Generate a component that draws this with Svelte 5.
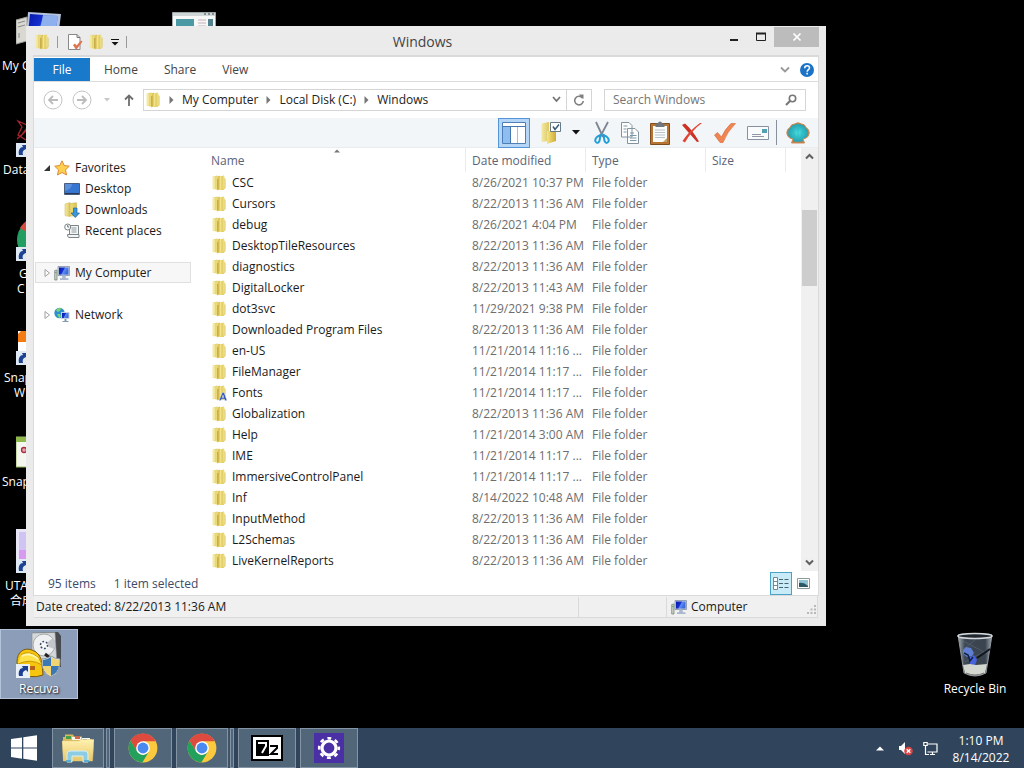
<script>
  const files = [
    ['CSC', '8/26/2021 10:37 PM'],
    ['Cursors', '8/22/2013 11:36 AM'],
    ['debug', '8/26/2021 4:04 PM'],
    ['DesktopTileResources', '8/22/2013 11:36 AM'],
    ['diagnostics', '8/22/2013 11:36 AM'],
    ['DigitalLocker', '8/22/2013 11:43 AM'],
    ['dot3svc', '11/29/2021 9:38 PM'],
    ['Downloaded Program Files', '8/22/2013 11:36 AM'],
    ['en-US', '11/21/2014 11:16 ...'],
    ['FileManager', '11/21/2014 11:17 ...'],
    ['Fonts', '11/21/2014 11:17 ...'],
    ['Globalization', '8/22/2013 11:36 AM'],
    ['Help', '11/21/2014 3:00 AM'],
    ['IME', '11/21/2014 11:17 ...'],
    ['ImmersiveControlPanel', '11/21/2014 11:17 ...'],
    ['Inf', '8/14/2022 10:48 AM'],
    ['InputMethod', '8/22/2013 11:36 AM'],
    ['L2Schemas', '8/22/2013 11:36 AM'],
    ['LiveKernelReports', '8/22/2013 11:36 AM']
  ];
  const crumbs = ['My Computer', 'Local Disk (C:)', 'Windows'];
  const shortcuts = [
    { icon: 'pc', y: 8, lines: [['My C', 2]] },
    { icon: 'data', y: 112, lines: [['Data', 3]] },
    { icon: 'chrome', y: 216, lines: [['G', 19], ['C', 17]] },
    { icon: 'snapw', y: 320, lines: [['Snap', 4], ['W', 14]] },
    { icon: 'snap', y: 424, lines: [['Snap', 2]] },
    { icon: 'uta', y: 528, lines: [['UTA', 5], ['合成', 10]] }
  ];
</script>

{#snippet folder(size, letter = false)}
  <svg width={size} height={size} viewBox="0 0 16 16" aria-hidden="true">
    <path d="M1.500 1.500 6.500.500v14l-5-.500z" fill="url(#fold-a)" />
    <path d="M8.500 1.500 13 .500l.5 2.500 1 1v9l-2 2h-4z" fill="url(#fold-c)" />
    <path d="M5.500 1.500 9 .800v13.200l-2.500 1.500-1-1z" fill="url(#fold-b)" />
    <path d="M9 1.500v12.500M3 2v11.500" stroke="#fbf6b8" stroke-width=".8" />
    <path d="M13 1v12.500" stroke="#fdf9c8" stroke-width=".7" />
    <path d="M6.800 4v10.500" stroke="#b79a35" stroke-width=".9" />
    {#if letter}
      <path d="m8 15.600 3.400-8.200h1.600l3 8.200h-2.200l-.5-1.700h-2.700l-.6 1.700zm3.100-3.100h1.700l-.8-2.600z" fill="#2f57b8" stroke="#e8efff" stroke-width=".4" />
    {/if}
  </svg>
{/snippet}

{#snippet computer(size)}
  <svg width={size} height={size} viewBox="0 0 16 16" aria-hidden="true">
    <path d="M.7 5.500 3 5v10H.700z" fill="#c9d4c4" stroke="#6f7d74" stroke-width=".7" />
    <path d="M1.200 7.500h1.200" stroke="#58a050" />
    <path d="M4 1.500h11.500v9H4z" fill="#c7d1e0" stroke="#7986a0" stroke-width=".7" />
    <path d="M5 2.500h9.500V9.600H5z" fill="url(#screen)" />
    <path d="M8.500 10.500h3l.5 3h-4zM6 13.300h8.500v1.700H6z" fill="#a9b8cf" />
  </svg>
{/snippet}

{#snippet chrome(size)}
  <svg width={size} height={size} viewBox="0 0 48 48" aria-hidden="true">
    <circle cx="24" cy="24" r="23" fill="#fbc93d" />
    <path d="M4 12.500A23 23 0 0 1 44.200 13H24L14.500 30z" fill="#de4a3e" />
    <path d="M4 12.500A23 23 0 0 0 23 47l10.500-17.500a11 11 0 0 1-19-.5z" fill="#23a05b" />
    <circle cx="24" cy="24" r="11" fill="#fff" />
    <circle cx="24" cy="24" r="8.700" fill="#4a8af0" />
  </svg>
{/snippet}

{#snippet arrow()}
  <path d="M0 31h14v14H0z" fill="#dfe9f4" />
  <path d="M3 43c-1-5 1-8 4-8l-1-2h6v6l-2-2c-3 1-4 3-3 6z" fill="#1d4291" />
{/snippet}

<svg class="defs" width="0" height="0" aria-hidden="true">
  <defs>
    <linearGradient id="fold-a"><stop stop-color="#f3e9a4" /><stop offset="1" stop-color="#dcc862" /></linearGradient>
    <linearGradient id="fold-b"><stop stop-color="#f4e584" /><stop offset="1" stop-color="#cfaa34" /></linearGradient>
    <linearGradient id="fold-c"><stop stop-color="#efdd78" /><stop offset="1" stop-color="#d9c358" /></linearGradient>
    <linearGradient id="screen" x2="1" y2=".4"><stop stop-color="#0716a8" /><stop offset=".5" stop-color="#1530d0" /><stop offset=".6" stop-color="#5f8cf0" /><stop offset="1" stop-color="#3b68dc" /></linearGradient>
    <linearGradient id="glass" x2="1"><stop stop-color="#a7b0b8" /><stop offset=".2" stop-color="#3d4854" /><stop offset=".8" stop-color="#39434e" /><stop offset="1" stop-color="#a5adb5" /></linearGradient>
    <linearGradient id="gold" y2="1" x2="0"><stop stop-color="#fff1b0" /><stop offset="1" stop-color="#e8c767" /></linearGradient>
    <radialGradient id="shell-fill"><stop stop-color="#48e0e0" /><stop offset=".8" stop-color="#27a5b4" /><stop offset="1" stop-color="#c07850" /></radialGradient>
  </defs>
</svg>

<div class="desktop">
  <div class="canvas">
    {#each shortcuts as s}
      <div class="shortcut" style="top: {s.y}px">
        <svg width="46" height="46" viewBox="0 0 46 46" aria-hidden="true">
          {#if s.icon === 'pc'}
            <path d="M0 12 11 9v24L0 36z" fill="#d9d9d2" stroke="#999" />
            <path d="m2 15 7-2M2 19l7-2M3 25v5" stroke="#888" />
            <path d="m12 4 33 2-3 24-32-2z" fill="#b5c3de" />
            <path d="m14 6 28 2-3 19-27-1z" fill="url(#screen)" />
            <path d="m27 7 15 1-3 19-16-1z" fill="#8fb0ee" />
          {:else if s.icon === 'data'}
            <path d="m2 9 9 4 8-5-3 12 6 6-12 2-8-5 4-8zm3 15 8-11 8 10M1 27l9-8 8 8" fill="none" stroke="#a8242e" stroke-width="1.300" />
          {:else if s.icon === 'chrome'}
            <circle cx="23" cy="24" r="22" fill="#219e60" />
            <path d="M4 12A22 22 0 0 1 42 12L23 24z" fill="#d84b42" />
          {:else if s.icon === 'snapw'}
            <path d="M2 11h40v33H2z" fill="#fff" /><path d="M2 14l3-3h37v11H2z" fill="#f47a12" />
          {:else if s.icon === 'snap'}
            <path d="M0 13h44v30H0z" fill="#f4f6ef" stroke="#9cba62" /><path d="M0 13h44v5H0z" fill="#8fb84c" />
            <circle cx="8" cy="26" r="2.500" fill="#e7a0a8" stroke="#a82d44" stroke-width="1.300" />
          {:else}
            <path d="M0 1h44v43H0z" fill="#e8e6f4" /><path d="M3 4h40v27H3z" fill="#cfc4f4" /><path d="M3 22h40v9H3z" fill="#d89af0" /><path d="M10 18l3-4v17H10z" fill="#fff" />
          {/if}
          {#if s.icon !== 'pc' && s.icon !== 'snap'}{@render arrow()}{/if}
        </svg>
        {#each s.lines as [text, x]}
          <span style="padding-left: {x}px">{text}</span>
        {/each}
      </div>
    {/each}

    <svg class="page-icon" width="44" height="32" viewBox="0 0 44 32" aria-hidden="true">
      <path d="M.5.5h43v31H.5z" fill="#f6f8f8" stroke="#9da6a8" /><path d="M1 1h42v3H1z" fill="#ced6d8" />
      <path d="M4 7h18v20H4z" fill="#4b99a4" /><path d="M26 8h8M26 11h8M26 14h8" stroke="#c3aeb4" /><path d="M36 7h5v20h-5z" fill="#53828c" />
      <path d="M32 2h2M36 2h2M40 2h2" stroke="#404648" />
    </svg>

    <button class="desk recuva">
      <svg width="46" height="46" viewBox="0 0 46 46" aria-hidden="true">
        <path d="m16 1 26-1 3 4v31H16z" fill="#474a4e" /><path d="m16 1 23-.500 2 32H16z" fill="#d5d8db" stroke="#888" stroke-width=".6" />
        <circle cx="28" cy="13" r="11" fill="#eef0f1" stroke="#a5a9ad" /><path d="m28 13 9-7a11 11 0 0 1 1 11z" fill="#c3c7cb" />
        <circle cx="28" cy="13" r="3.500" fill="#f8f8f8" stroke="#3d4964" stroke-width="1.500" stroke-dasharray="1.800 1.800" />
        <path d="m29 22 5 4" stroke="#222" stroke-width="3" />
        <path d="M1 30C1 20 8 15 16 18q9 3 10 14l1 11q-13 5-25-4z" fill="#f6c50e" stroke="#7d5b09" />
        <path d="M5 23q8-6 18 3l3 7Q15 26 2 32" fill="#ffe24a" stroke="#cb9609" />
        <path d="M6 24q8-4 16 3" stroke="#fff6a8" fill="none" stroke-width="2" /><path d="M13 34h6v4h-6z" fill="#b5651a" />
        <path d="M26 27q5 0 9-3 4 3 9 3 1 14-9 18-10-4-9-18z" fill="#e9ebe4" stroke="#8a97a2" />
        <path d="M27 28q4 0 8-3v9h-8zM35 34h8q-1 7-8 10z" fill="#3c78b4" /><path d="M35 25q4 3 8 3v6h-8zM27 34h8v10q-7-3-8-10z" fill="#f2d573" />
        <path d="M0 32h14v14H0z" fill="#e9f0f8" /><path d="M3 44c-1-5 1-8 4-8l-1-2h6v6l-2-2c-3 1-4 3-3 6z" fill="#1d3f94" />
      </svg>
      <span>Recuva</span>
    </button>

    <button class="desk bin">
      <svg width="46" height="46" viewBox="0 0 46 46" aria-hidden="true">
        <path d="m6 3 34 0-6 38q-11 6-22 0z" fill="url(#glass)" stroke="#8d959d" />
        <path d="m9 8 27 14M11 18l14-12M13 30l22-12" stroke="#6c7885" stroke-width=".7" opacity=".6" />
        <path d="m11 18 3-3 5 1 3 5-2 3-5 1-4-3z" fill="#5f7fd4" /><path d="m18 25 4-2 3 5-2 5-5-1z" fill="#4662dd" /><path d="m12 21 4 2 2 6 3-4" fill="none" stroke="#142040" stroke-width="1.500" /><path d="m25 26 13-9" stroke="#11151c" stroke-width="2" />
        <path d="m11 33 7-1 6 1 11-1-2 9q-10 5-20 0z" fill="#d4d6d0" /><path d="M14 41q9 4 18 0" stroke="#777" fill="none" />
        <ellipse cx="23" cy="4" rx="17" ry="2.500" fill="#20262d" stroke="#d4d8dc" stroke-width="1.500" />
      </svg>
      <span>Recycle Bin</span>
    </button>

    <main class="window">
      <header class="titlebar">
        <div class="quick">
          {@render folder(16)}
          <i class="bar"></i>
          <button aria-label="Properties">
            <svg width="16" height="16" viewBox="0 0 16 16"><path d="M1.500.5h8.500l3 3V15.500H1.500z" fill="#fff" stroke="#898989" /><path d="M10 .5v3h3" fill="none" stroke="#777" /><path d="m6 11 2-1.500 1.500 2L14 6.500l1.500 1L10 15H8.500z" fill="#df7350" /></svg>
          </button>
          <button aria-label="New folder">{@render folder(16)}</button>
          <button aria-label="Customize toolbar"><svg width="8" height="8" viewBox="0 0 8 8"><path d="M0 1.500h8" stroke="#111" /><path d="M.5 4h7L4 7.500z" fill="#111" /></svg></button>
          <i class="bar"></i>
        </div>
        <h1>Windows</h1>
        <div class="controls">
          <button aria-label="Minimize"><svg width="10" height="12" viewBox="0 0 10 12"><path d="M1 9h8" stroke="#222" stroke-width="2" /></svg></button>
          <button aria-label="Maximize"><svg width="12" height="12" viewBox="0 0 12 12"><path d="M1.500 2.500h9v7h-9z" fill="none" stroke="#222" /><path d="M1 2.500h10" stroke="#222" stroke-width="2" /></svg></button>
          <button class="close" aria-label="Close"><svg width="10" height="10" viewBox="0 0 10 10"><path d="m1.500 1.500 7 7m0-7-7 7" stroke="#fff" stroke-width="1.700" /></svg></button>
        </div>
      </header>

      <div class="body">
        <nav class="tabs">
          <button class="file">File</button>
          <button>Home</button><button>Share</button><button>View</button>
          <span class="grow"></span>
          <button aria-label="Expand ribbon"><svg width="10" height="8" viewBox="0 0 10 8"><path d="m1 1.500 4 4 4-4" fill="none" stroke="#999" stroke-width="1.800" /></svg></button>
          <button class="help" aria-label="Help"><svg width="14" height="14" viewBox="0 0 14 14"><circle cx="7" cy="7" r="7" fill="#1b73c8" /><path d="M4.700 5.200q0-2.400 2.400-2.400t2.400 2.200c0 1.600-2.300 1.800-2.300 3.700M7.100 9.800v1.800" fill="none" stroke="#fff" stroke-width="1.500" /></svg></button>
        </nav>

        <div class="address-row">
          <button aria-label="Back"><svg width="20" height="20" viewBox="0 0 20 20"><circle cx="10" cy="10" r="9" fill="none" stroke="#c4c4c4" /><path d="M15 10H6m4-4-4 4 4 4" fill="none" stroke="#bcbcbc" stroke-width="1.800" /></svg></button>
          <button aria-label="Forward"><svg width="20" height="20" viewBox="0 0 20 20"><circle cx="10" cy="10" r="9" fill="none" stroke="#c4c4c4" /><path d="M5 10h9m-4-4 4 4-4 4" fill="none" stroke="#bcbcbc" stroke-width="1.800" /></svg></button>
          <button aria-label="Recent locations"><svg width="6" height="4" viewBox="0 0 6 4"><path d="M0 0h6L3 3.500z" fill="#c8c8c8" /></svg></button>
          <button aria-label="Up"><svg width="10" height="12" viewBox="0 0 10 12"><path d="M5 12V1.500M1 5.500l4-4 4 4" fill="none" stroke="#6e6e6e" stroke-width="1.800" /></svg></button>
          <div class="address">
            {@render folder(16)}
            {#each crumbs as c}
              <svg class="sep" width="5" height="8" viewBox="0 0 5 8" aria-hidden="true"><path d="M.5 0v8L4.500 4z" fill="#777" /></svg>
              <button>{c}</button>
            {/each}
            <span class="grow"></span>
            <button class="drop" aria-label="Previous locations"><svg width="9" height="7" viewBox="0 0 9 7"><path d="m1 1 3.500 4L8 1" fill="none" stroke="#707070" stroke-width="1.700" /></svg></button>
            <button class="refresh" aria-label="Refresh"><svg width="12" height="12" viewBox="0 0 12 12"><path d="M9.500 4A4.300 4.300 0 1 0 10.300 7" fill="none" stroke="#808080" stroke-width="1.600" /><path d="M6 .5h4.500V5L8.500 3.800z" fill="#808080" /></svg></button>
          </div>
          <label class="search">
            <input type="text" placeholder="Search Windows" aria-label="Search Windows" />
            <svg width="12" height="12" viewBox="0 0 12 12" aria-hidden="true"><circle cx="7.500" cy="4.500" r="3.200" fill="none" stroke="#777" stroke-width="1.600" /><path d="m5 7-4 4" stroke="#777" stroke-width="2.200" /></svg>
          </label>
        </div>

        <div class="toolbar">
          <button class="active" aria-label="Navigation pane"><svg width="24" height="22" viewBox="0 0 24 22"><path d="M.5.5h23v21H.5z" fill="#fff" stroke="#4c7fb8" /><path d="M1 4.500h22" stroke="#4676ae" /><path d="M1 5h7v16H1z" fill="#8fbdf0" /><path d="M8.500 5v16" stroke="#4676ae" /><path d="M15.500 5v16" stroke="#a9bdd4" /></svg></button>
          <button aria-label="Folder options"><svg width="20" height="22" viewBox="0 0 20 22"><path d="M.5 1.500 8 0v19l-7.500 1z" fill="url(#fold-a)" /><path d="M6 9l9-1v11l-9 3z" fill="url(#fold-b)" /><path d="M9.500.5h10v9h-10z" fill="#fff" stroke="#667984" /><path d="m12 4.500 2 3 4-5" fill="none" stroke="#385976" stroke-width="1.500" /></svg></button>
          <button aria-label="More options"><svg width="8" height="5" viewBox="0 0 8 5"><path d="M0 0h8L4 4.500z" fill="#111" /></svg></button>
          <button aria-label="Cut"><svg width="16" height="24" viewBox="0 0 16 24"><path d="m2 1 7 15M14 1 6 16" stroke="#7d8691" stroke-width="1.800" /><path d="m6.500 14-3 1.500q-3 2.500-2 5 2 3 4-.500zM9.500 14l3 1.500q3 2.500 2 5-2 3-4-.500z" fill="none" stroke="#239dd8" stroke-width="2" /></svg></button>
          <button aria-label="Copy"><svg width="18" height="22" viewBox="0 0 18 22"><path d="M.5.5H8l3 3V15H.500zM6.500 6.500H14l3.500 3.500v11.500h-11z" fill="#fff" stroke="#84929c" /><path d="M2.500 4h4M2.500 7h3M2.500 10h3M9 11h4M9 13.500h6.500M9 16h6.500M9 18.500h6.500" stroke="#7b98ab" /></svg></button>
          <button aria-label="Paste"><svg width="20" height="24" viewBox="0 0 20 24"><path d="M.5 2.500h19v21H.5z" fill="#b87432" stroke="#7e4d1d" /><path d="M3 5h14v16H3z" fill="#fafcfb" /><path d="M5.500 2.500h2q2.500-4 5 0h2V6h-9z" fill="#71767b" /><path d="M5 9h10M5 11.500h10M5 14h10M5 16.500h10" stroke="#b8c5cd" /><path d="M13 21l4-4v4z" fill="#c2a16d" /></svg></button>
          <button aria-label="Delete"><svg width="22" height="20" viewBox="0 0 22 20"><path d="M1 2 4 .500q7 6 14 18l-2 .500Q8 10 1 2z" fill="#cc2f23" /><path d="M21 0Q11 7 4 19.500L1.500 18Q8 8 19 0z" fill="#de4533" /></svg></button>
          <button aria-label="Rename"><svg width="22" height="20" viewBox="0 0 22 20"><path d="m.5 12 3-2.500 4 4.500Q11 6 17 .5h4.500Q13 9 9 19.500H6z" fill="#ee8553" stroke="#d86430" stroke-width=".6" /></svg></button>
          <button aria-label="Mail"><svg width="22" height="14" viewBox="0 0 22 14"><path d="M.5.5h21v13H.5z" fill="#fafbfc" stroke="#8792a0" /><path d="M15 3h5v4h-5z" fill="#52a0b4" /><path d="M5 8.500h9M5 10.500h12" stroke="#9098a5" /></svg></button>
          <i class="divider"></i>
          <button aria-label="Shell"><svg width="24" height="22" viewBox="0 0 24 22"><path d="M7 17Q1 16 .8 10.500 1 7 4 5.500 5 2 8.500 2 12-.5 15.500 2 19 2 20 5.500q3 1.500 3.200 5Q23 16 17 17l1.500 4h-13z" fill="url(#shell-fill)" stroke="#cf8a50" /><path d="m9 18-6-8M10 18 6 5M12 18V2M14 18l4-13M15 18l6-8" stroke="#2bb7c2" stroke-width=".7" /></svg></button>
        </div>

        <div class="content">
          <aside>
            <a href="#favorites" class="root">
              <svg width="8" height="8" viewBox="0 0 8 8"><path d="M7 1v6H1z" fill="#333" /></svg>
              <svg width="16" height="16" viewBox="0 0 16 16"><path d="m8 .8 2.200 4.700 5.100.7-3.800 3.600 1 5.200L8 12.500l-4.500 2.500 1-5.200L.7 6.200l5.100-.7z" fill="#ffd050" stroke="#dc8a35" /></svg>
              Favorites
            </a>
            <a href="#desktop" class="leaf">
              <svg width="16" height="16" viewBox="0 0 16 16"><path d="M.5 2.500h15v11H.5z" fill="#3777d2" stroke="#4b5f7c" /><path d="M1 3h7q0 5-7 7z" fill="#5c8fdc" /><path d="M1 12.500h14" stroke="#28364f" /></svg>
              Desktop
            </a>
            <a href="#downloads" class="leaf">
              <svg width="16" height="16" viewBox="0 0 16 16"><path d="M1 2 6 .600v14L1 13.600z" fill="url(#fold-a)" stroke="#d8c060" stroke-width=".6" /><path d="M6 1.500 12.500.8V14H6z" fill="url(#fold-c)" stroke="#cdb24c" stroke-width=".6" /><path d="M9.500 6h3.500v5h2.500l-4.200 4.500L7 11h2.500z" fill="#3a97dc" stroke="#2063a4" stroke-width=".7" /></svg>
              Downloads
            </a>
            <a href="#recent" class="leaf">
              <svg width="16" height="16" viewBox="0 0 16 16"><path d="M5.500 2.500h9v9h-9zM3.500 11.500h11.500v3h-10q-1.500 0-1.500-3z" fill="#f4f5f5" stroke="#7b8488" /><path d="M7.500 5h5M7.500 7h5M7.500 9h5" stroke="#929b9f" /><circle cx="3.700" cy="4" r="3" fill="#fff" stroke="#788287" /><path d="M3.700 2v2h1.500" stroke="#657075" fill="none" /></svg>
              Recent places
            </a>
            <a href="#computer" class="root group selected">
              <svg width="8" height="8" viewBox="0 0 8 8"><path d="M2 .5v7L6.500 4z" fill="#fff" stroke="#a0a0a0" /></svg>
              {@render computer(16)}
              My Computer
            </a>
            <a href="#network" class="root group">
              <svg width="8" height="8" viewBox="0 0 8 8"><path d="M2 .5v7L6.500 4z" fill="#fff" stroke="#a0a0a0" /></svg>
              <svg width="16" height="16" viewBox="0 0 16 16"><circle cx="5.500" cy="6" r="5.200" fill="#2e8fd0" /><path d="M2 3q3-3 5-2L6 4 3.500 5zM3 7l3 0 1 3-2 1z" fill="#7ed36e" /><path d="M7 5h8.500v7H7z" fill="#c5d0e4" /><path d="M8 6h6.500v5H8z" fill="url(#screen)" /><path d="M10.500 12h2v2h2v1h-6v-1h2z" fill="#8497b4" /></svg>
              Network
            </a>
          </aside>

          <div class="listing">
            <table>
              <colgroup><col /><col class="c-date" /><col class="c-type" /><col class="c-size" /><col class="c-rest" /></colgroup>
              <thead>
                <tr>
                  <th class="sorted">Name<svg width="6" height="4" viewBox="0 0 6 4" aria-hidden="true"><path d="M0 3.500 3 .500 6 3.500z" fill="#777" /></svg></th>
                  <th>Date modified</th><th>Type</th><th>Size</th><th></th>
                </tr>
              </thead>
              <tbody>
                {#each files as [name, date]}
                  <tr>
                    <td class="name"><div>{@render folder(16, name === 'Fonts')}{name}</div></td>
                    <td>{date}</td><td>File folder</td><td></td><td></td>
                  </tr>
                {/each}
              </tbody>
            </table>
          </div>

          <div class="scroll">
            <button aria-label="Scroll up"><svg width="9" height="7" viewBox="0 0 9 7"><path d="M1 5.500 4.500 2 8 5.500" fill="none" stroke="#606060" stroke-width="2" /></svg></button>
            <div class="track"><div class="thumb"></div></div>
            <button aria-label="Scroll down"><svg width="9" height="7" viewBox="0 0 9 7"><path d="M1 1.500 4.500 5 8 1.500" fill="none" stroke="#606060" stroke-width="2" /></svg></button>
          </div>
        </div>

        <div class="status">
          <span>95 items</span><span>1 item selected</span>
          <span class="grow"></span>
          <button class="on" aria-label="Details view"><svg width="16" height="13" viewBox="0 0 16 13"><path d="M.5.5h4v12h-4zM.5 4.500h4M.5 8.500h4" fill="#fff" stroke="#778996" /><path d="M6 2.500h4M11.500 2.500h4M6 6.500h4M11.500 6.500h4M6 10.500h4M11.500 10.500h4" stroke="#4b6270" /></svg></button>
          <button aria-label="Thumbnail view"><svg width="13" height="11" viewBox="0 0 13 11"><path d="M.5.5h12v10H.5z" fill="#fff" stroke="#8c99a0" /><path d="M2 2h9v7H2z" fill="#8fc4d4" /><path d="M2 5q5-1 9 3v1H2z" fill="#2d5865" /></svg></button>
        </div>
      </div>

      <footer>
        <span class="created">Date created: 8/22/2013 11:36 AM</span>
        <span class="blank"></span>
        <span class="where">{@render computer(16)}Computer</span>
        <svg class="grip" width="9" height="9" viewBox="0 0 9 9" aria-hidden="true"><path d="M7 0h2v2H7zM7 3.500h2v2H7zM3.500 3.500h2v2h-2zM0 7h2v2H0zM3.500 7h2v2h-2zM7 7h2v2H7z" fill="#b8b8b8" /></svg>
      </footer>
    </main>
  </div>

  <nav class="taskbar">
    <button class="start" aria-label="Start"><svg width="26" height="26" viewBox="0 0 26 26"><path d="M0 4 11 2.400V12.500H0zM12.300 2.200 26 .3V12.500H12.300zM0 13.600h11v10.100L0 22zM12.300 13.600H26v12.200l-13.700-2z" fill="#fff" /></svg></button>
    <button class="task stack" aria-label="File Explorer">
      <svg width="32" height="30" viewBox="0 0 32 30"><path d="M1 4h2V1.500h8l1 2h8V6h9v-.5l1 2V28H1z" fill="#d8b95b" /><path d="M4 3h5v3H4z" fill="#49a04a" /><path d="M10 4h9v3h-9z" fill="#f8f8ee" /><path d="M13 3h5v3h-5z" fill="#d0664a" /><path d="M20 5h8v3h-8z" fill="#fbfbf6" /><path d="M21 6h4v2h-4z" fill="#4392c8" /><path d="M0 8h17l2-1.500h13L30.500 28H1.500z" fill="url(#gold)" stroke="#e6cb7a" stroke-width=".5" /><path d="M5 29v-8q0-3 3-3h15q3 0 3 3v8h-5v-6H10v6z" fill="#8dcde4" stroke="#d3f0f7" /><path d="M4 28h5M22 28h5" stroke="#5faccc" stroke-width="2" /></svg>
    </button>
    <button class="task" aria-label="Google Chrome">{@render chrome(30)}</button>
    <button class="task stack" aria-label="Google Chrome windows">{@render chrome(30)}</button>
    <button class="task" aria-label="7-Zip">
      <svg width="32" height="26" viewBox="0 0 32 26"><path d="M1 1h30v24H1z" fill="#fff" stroke="#000" stroke-width="2" /><path d="M5 5h13v16H5z" /><path d="M7 8h8v3l-4 7" fill="none" stroke="#fff" stroke-width="2" /><path d="M19 11h7v2l-6 6h7" fill="none" stroke="#000" stroke-width="2" /></svg>
    </button>
    <button class="task" aria-label="Settings">
      <svg width="30" height="30" viewBox="0 0 30 30"><path d="M0 0h30v30H0z" fill="#4b2fa5" /><circle cx="15" cy="15" r="7" fill="none" stroke="#fff" stroke-width="3.200" /><circle cx="15" cy="15" r="9.800" fill="none" stroke="#fff" stroke-width="2.600" stroke-dasharray="3.850 3.850" stroke-dashoffset="1.900" /></svg>
    </button>
    <span class="grow"></span>
    <div class="tray">
      <button aria-label="Show hidden icons"><svg width="8" height="5" viewBox="0 0 8 5"><path d="M0 4.500 4 .500l4 4z" fill="#fff" /></svg></button>
      <button aria-label="Volume muted"><svg width="15" height="15" viewBox="0 0 15 15"><path d="M1 5h2l4-4v12L3 9H1z" fill="#fff" /><circle cx="10.500" cy="10" r="4.300" fill="#d94545" /><path d="m8.700 8.200 3.600 3.600m0-3.600-3.600 3.600" stroke="#fff" stroke-width="1.400" /></svg></button>
      <button aria-label="Network"><svg width="15" height="15" viewBox="0 0 15 15"><path d="M5 3h9v8H4.500M7 13.500h5M9.500 11v2" fill="none" stroke="#fff" stroke-width="1.200" /><path d="M.8 1.500h3.400v3H.800zM2.500 4.500v9H6" fill="none" stroke="#fff" stroke-width="1.200" /></svg></button>
    </div>
    <button class="clock"><span>1:10 PM</span><span>8/14/2022</span></button>
  </nav>
</div>

<style>
  :global(body) { background: #000; }
  .desktop {
    display: flex; flex-direction: column; min-height: 100vh; overflow: hidden; background: #000;
    font: 12px/16px "Open Sans", "Noto Sans", "Noto Sans CJK SC", sans-serif; color: #1a1a1a;
  }
  .desktop *, .desktop *::before { box-sizing: border-box; }
  svg { display: block; flex: none; }
  .defs { position: absolute; }
  button { font: inherit; color: inherit; border: 0; padding: 0; margin: 0; background: none; display: flex; align-items: center; justify-content: center; }
  .grow { flex: 1; }
  .canvas { position: relative; flex: 1; min-height: 700px; }

  .shortcut { position: absolute; left: 0; width: 78px; color: #fff; line-height: 15px; }
  .shortcut svg { margin: 0 0 4px 16px; }
  .shortcut span { display: block; white-space: nowrap; }
  .page-icon { position: absolute; left: 172px; top: 12px; }
  .desk { position: absolute; flex-direction: column; justify-content: flex-start; gap: 3px; width: 78px; height: 70px; padding-top: 3px; color: #fff; text-shadow: 1px 1px 2px #000; white-space: nowrap; }
  .recuva { left: 0; top: 629px; background: #8b9db8; border: 1px solid #b3c3d8; padding-top: 2px; }
  .bin { right: 10px; top: 629px; }

  .window { position: absolute; left: 26px; top: 26px; width: calc(100% - 224px); padding: 0 8px 8px; background: #ebebeb; }
  .titlebar { display: grid; grid-template-columns: 1fr auto 1fr; height: 30px; margin-right: -1px; margin-left: -8px; }
  .quick { display: flex; align-items: center; gap: 7px; padding-left: 8px; }
  .quick .bar { width: 1px; height: 12px; background: #999; }
  .quick .bar + button { margin-left: 2px; }
  .quick button + button { margin-left: -2px; }
  .quick button:nth-of-type(3) { margin-left: 0; }
  h1 { margin: 0; font-size: 14px; font-weight: 400; line-height: 31px; color: #444; }
  .controls { display: flex; align-items: flex-start; justify-content: flex-end; }
  .controls button { width: 27px; height: 20px; margin-top: 1px; }
  .controls .close { width: 45px; background: #bcbcbc; }

  .body { background: #fff; outline: 1px solid #dadada; }
  .tabs { display: flex; height: 26px; align-items: center; gap: 26px; padding: 1px 4px 0 0; border-top: 1px solid #dadada; border-bottom: 1px solid #dcdcdc; color: #444; }
  .tabs .file { width: 56px; height: 23px; margin-right: -12px; background: #1979ca; color: #fff; }
  .tabs .help { margin-left: -16px; }

  .address-row { display: flex; align-items: center; height: 36px; padding: 0 12px 1px 9px; }
  .address-row > button { margin-right: 9px; }
  .address-row > button:nth-child(2) { margin-right: 12px; }
  .address-row > button:nth-child(3) { margin-right: 14px; }
  .address { flex: 1; display: flex; align-items: center; height: 22px; padding-left: 1px; border: 1px solid #d5d5d5; }
  .address button { white-space: nowrap; color: #222; }
  .sep { margin: 0 8px; }
  .address .drop { margin-right: 5px; }
  .address .refresh { width: 25px; height: 20px; border-left: 1px solid #d5d5d5; }
  .search { display: flex; align-items: center; width: 202px; height: 22px; margin-left: 12px; padding: 0 8px; border: 1px solid #d5d5d5; }
  .search input { flex: 1; min-width: 0; border: 0; padding: 0; outline: 0; font: inherit; background: none; }
  .search input::placeholder { color: #757575; opacity: 1; }

  .toolbar { display: flex; align-items: center; justify-content: flex-end; gap: 11px; height: 30px; padding-right: 8px; background: #f3f6f8; border-bottom: 1px solid #e8edf0; }
  .toolbar .active { width: 32px; height: 30px; background: #b4d5f6; border: 1px solid #5594d6; }
  .toolbar button:nth-child(4) { margin-left: 3px; }
  .divider { width: 1px; height: 25px; margin: 0 -2px 0 -4px; background: #87919a; }

  .content { display: flex; }
  aside { width: 156px; padding: 9px 0; margin-right: 10px; margin-left: 1px; }
  aside a { display: flex; align-items: center; height: 21px; color: #1a1a1a; text-decoration: none; white-space: nowrap; border: 1px solid transparent; }
  .root { gap: 3px; padding-left: 7px; }
  .root svg + svg { margin-right: 2px; }
  .leaf { gap: 5px; padding-left: 28px; }
  .group { margin-top: 21px; }
  .selected { background: #f7f7f7; border-color: #e0e0e0; }

  .listing { flex: 1; min-width: 0; }
  table { width: 100%; table-layout: fixed; border-collapse: separate; border-spacing: 0; }
  .c-date, .c-type { width: 120px; }
  .c-size { width: 80px; }
  .c-rest { width: 16px; }
  th { height: 24px; padding: 2px 0 0 6px; text-align: left; font-weight: 400; color: #5a6478; border-left: 1px solid #e8ebef; }
  th:first-child { padding-left: 9px; border-left-color: transparent; }
  .sorted { position: relative; }
  .sorted svg { position: absolute; top: 1px; left: 50%; }
  td { height: 21px; padding: 0 0 0 7px; color: #6d6d6d; white-space: nowrap; }
  td.name { padding-left: 10px; color: #1a1a1a; }
  td div { display: flex; align-items: center; gap: 5px; }

  .scroll { display: flex; flex-direction: column; width: 17px; background: #f0f0f0; }
  .scroll button { height: 17px; }
  .track { flex: 1; padding-top: 45px; }
  .thumb { height: 76px; margin: 0 1px; background: #cdcdcd; }

  .status { display: flex; align-items: center; height: 24px; padding: 0 4px 0 14px; color: #3c4b68; }
  .status span { padding-top: 1px; }
  .status span + span { margin-left: 18px; }
  .status button { width: 22px; height: 23px; }
  .status .on { background: #c9ebf8; border: 1px solid #4aa3c7; }

  footer { display: flex; align-items: center; height: 22px; margin: 1px 0 0; padding-top: 1px; border: 1px solid #dadada; border-width: 0 1px 1px 0; background: #f0f0f0; }
  .created { flex: 1; padding-left: 2px; }
  .blank { width: 88px; height: 20px; border-left: 1px solid #dadada; }
  .where { display: flex; align-items: center; gap: 4px; width: 141px; height: 20px; padding-left: 4px; border-left: 1px solid #dadada; }
  .grip { align-self: flex-end; margin: 0 1px 3px 0; }

  .taskbar { display: flex; height: 40px; align-items: stretch; padding-right: 10px; background: #30455c; color: #fff; }
  .start { width: 48px; margin-right: 4px; }
  .task { position: relative; width: 58px; margin-right: 4px; background: #52667a; border: 1px solid #8494a4; }
  .stack::before { content: ""; position: absolute; top: -1px; bottom: -1px; right: 2px; width: 4px; border: 1px solid #8494a4; border-width: 0 1px; background: #3f5368; }
  .stack { padding-right: 6px; }
  .tray { display: flex; align-items: center; gap: 14px; margin-right: 10px; }
  .tray button + button + button { margin-left: -4px; }
  .clock { flex-direction: column; width: 66px; line-height: 17px; padding-top: 2px; }
</style>
